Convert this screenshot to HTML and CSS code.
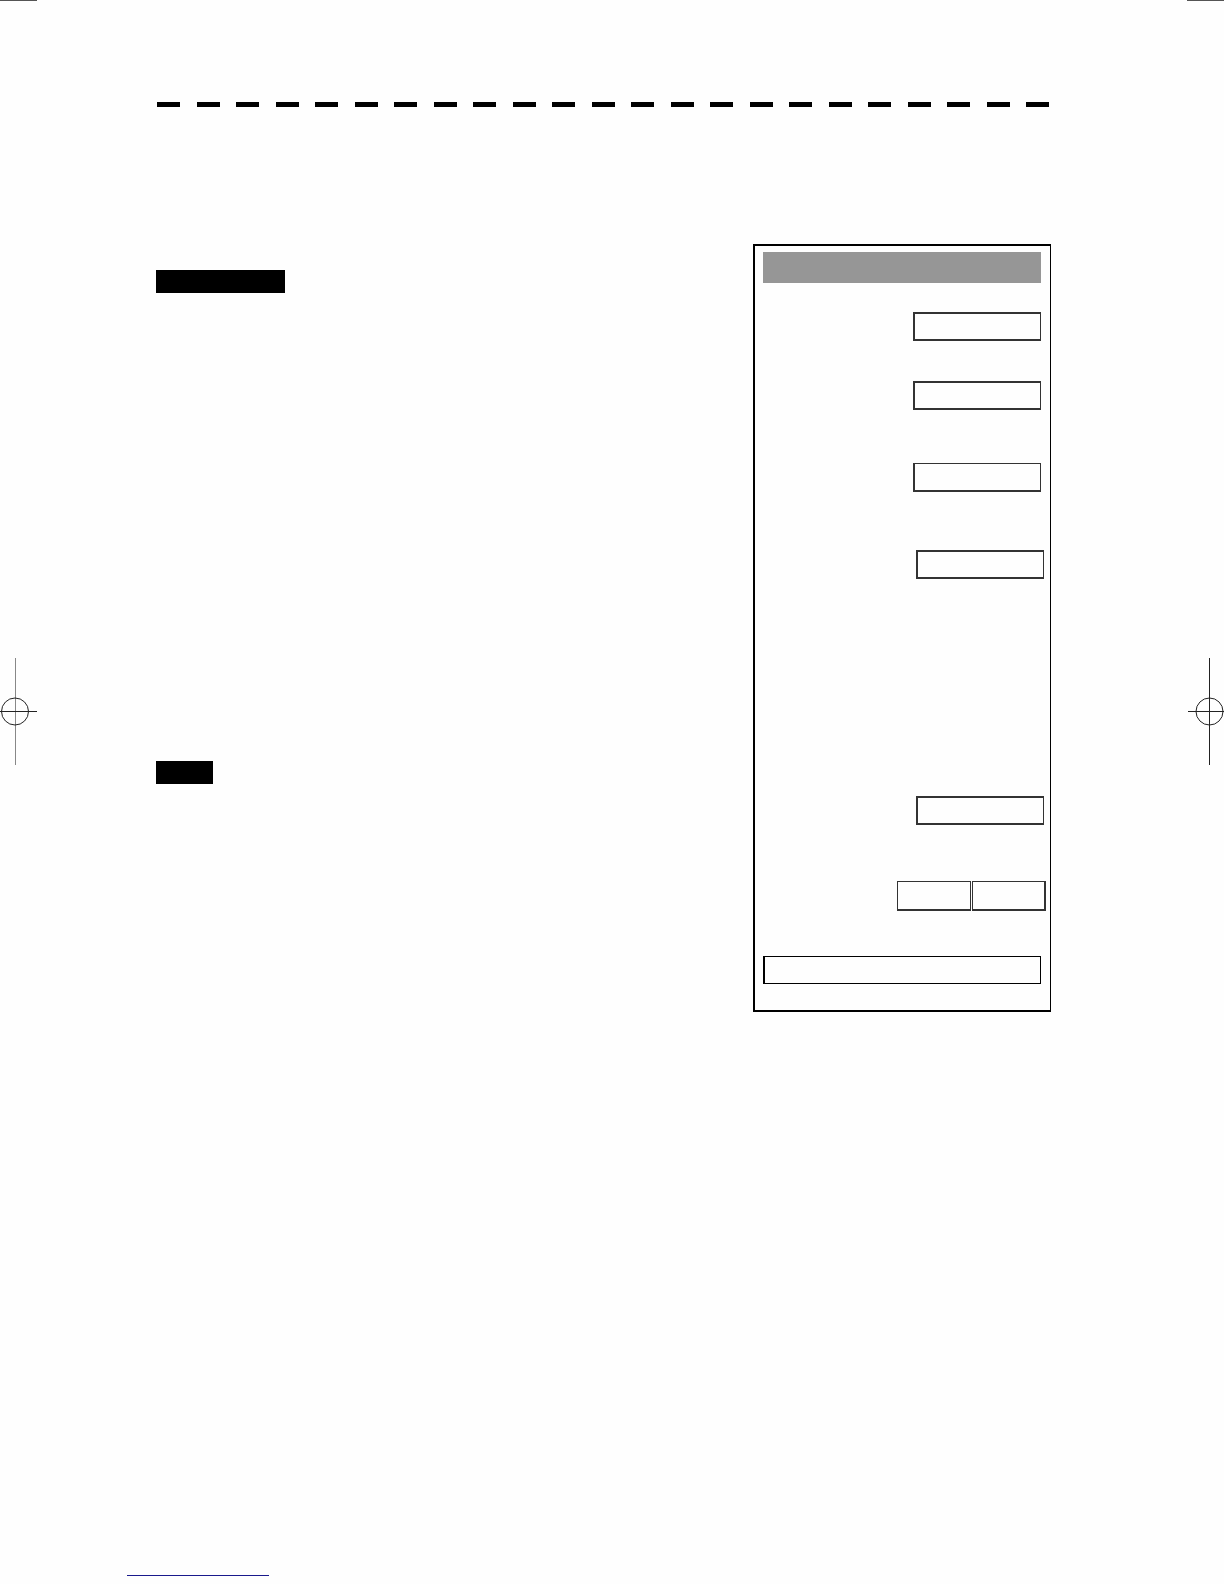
FILE: index.html
```html
<!DOCTYPE html>
<html lang="en">
<head>
    <meta charset="UTF-8">
    <meta name="viewport" content="width=device-width, initial-scale=1.0">
    <title>Settings</title>
    <link rel="stylesheet" href="styles.css">
</head>
<body>
    <div class="sheet">
        <!-- Left print marks -->
        <div class="marks">
            <div class="crop-line"></div>
            <svg class="register" width="37" height="107" viewBox="0 0 37 107" fill="none" stroke-width="1">
                <path d="M15.5 0V107" stroke="#888"/>
                <path d="M0 53.5H37" stroke="#222"/>
                <circle cx="15" cy="53.5" r="13.5" stroke="#222"/>
            </svg>
        </div>

        <main class="page">
            <div class="dashes">
                <span></span><span></span><span></span><span></span><span></span><span></span>
                <span></span><span></span><span></span><span></span><span></span><span></span>
                <span></span><span></span><span></span><span></span><span></span><span></span>
                <span></span><span></span><span></span><span></span><span></span>
            </div>

            <div class="content">
                <div class="headings">
                    <div class="tag tag-wide"></div>
                    <div class="tag tag-short"></div>
                </div>

                <form class="panel">
                    <div class="panel-title"></div>
                    <div class="fields fields-top">
                        <input class="field" type="text" aria-label="Setting 1">
                        <input class="field" type="text" aria-label="Setting 2">
                        <input class="field field-thin" type="text" aria-label="Setting 3">
                    </div>
                    <div class="fields fields-bottom">
                        <input class="field" type="text" aria-label="Setting 4">
                        <input class="field" type="text" aria-label="Setting 5">
                    </div>
                    <div class="choices">
                        <button class="choice" type="button" aria-label="Option 1"></button>
                        <button class="choice" type="button" aria-label="Option 2"></button>
                    </div>
                    <button class="wide-button" type="button" aria-label="Apply"></button>
                </form>
            </div>

            <footer class="footer">
                <a class="footer-link" href="#" aria-label="Home"></a>
            </footer>
        </main>

        <!-- Right print marks -->
        <div class="marks">
            <div class="crop-line"></div>
            <svg class="register" width="37" height="107" viewBox="0 0 37 107" fill="none" stroke-width="1">
                <path d="M22.5 0V107" stroke="#222"/>
                <path d="M1 53.5H37" stroke="#222"/>
                <circle cx="22.5" cy="53.5" r="13.5" stroke="#222"/>
            </svg>
        </div>
    </div>
</body>
</html>
```

FILE: styles.css
```css
* {
    box-sizing: border-box;
}
body {
    margin: 0;
    font-family: "Liberation Sans", Arial, sans-serif;
    background-color: #fefefe;
}
.sheet {
    display: grid;
    grid-template-columns: 37px 1fr 37px;
}
.crop-line {
    height: 1px;
    background-color: #555;
}
.register {
    display: block;
    margin-top: 657px;
}
.page {
    padding: 102px 0 8px;
}
.dashes {
    display: flex;
    justify-content: space-between;
    margin: 0 138px 0 120px;
}
.dashes span {
    width: 23px;
    height: 5px;
    background-color: #000;
}
.content {
    display: flex;
    justify-content: space-between;
    align-items: flex-start;
    margin: 137px 136px 0 119px;
}
.headings {
    display: flex;
    flex-direction: column;
    gap: 468px;
    padding-top: 26px;
}
.tag {
    height: 23px;
    background-color: #000;
}
.tag-wide {
    width: 129px;
}
.tag-short {
    width: 57px;
}
.panel {
    width: 298px;
    padding: 6px 0 26px 8px;
    border: 2px solid #000;
    border-right-width: 1px;
}
.panel-title {
    height: 31px;
    margin-right: 9px;
    background-color: #969696;
}
.fields {
    display: flex;
    flex-direction: column;
    align-items: flex-end;
}
.fields-top {
    gap: 40px;
    padding: 29px 9px 0 0;
}
.fields-top .field-thin {
    margin-top: 13px;
    border-top-width: 1px;
}
.fields-bottom {
    gap: 217px;
    padding: 58px 6px 0 0;
}
.field {
    width: 128px;
    height: 29px;
    padding: 0 6px;
    border: 2px solid #333;
    border-right-width: 1px;
    border-radius: 0;
    background-color: transparent;
    font: inherit;
}
.choices {
    display: flex;
    justify-content: flex-end;
    gap: 1px;
    padding: 56px 4px 0 0;
}
.choice {
    width: 74px;
    height: 30px;
    border: 1px solid #333;
    border-bottom-width: 2px;
    background-color: transparent;
}
.choice:last-child {
    border-right-width: 2px;
}
.wide-button {
    display: block;
    width: calc(100% - 9px);
    height: 28px;
    margin-top: 45px;
    border: 1px solid #000;
    border-left-width: 2px;
    background-color: transparent;
}
.footer {
    margin-top: 543px;
    padding-left: 90px;
}
.footer-link {
    display: block;
    width: 142px;
    height: 21px;
    border-bottom: 1px solid #1a1a8c;
}
```
